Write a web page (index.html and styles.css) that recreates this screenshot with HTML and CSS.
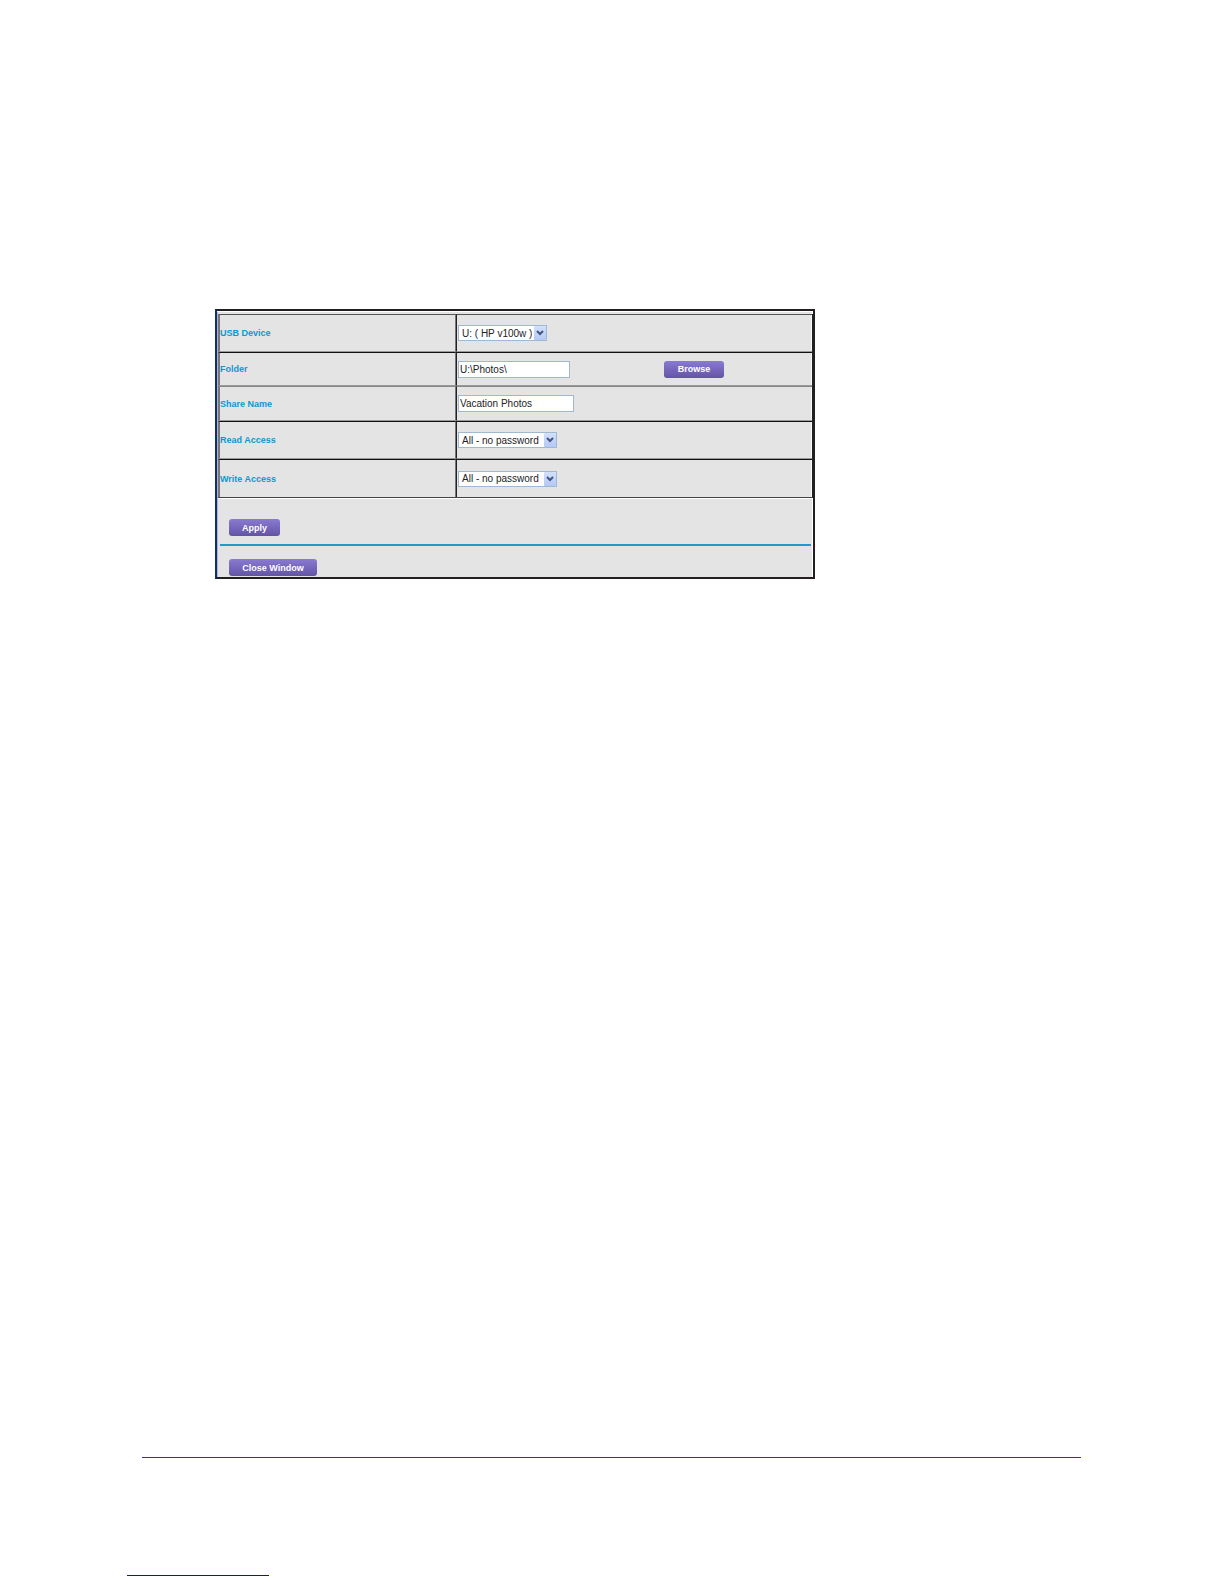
FILE: index.html
```html
<!DOCTYPE html>
<html lang="en">

<head>
  <meta charset="UTF-8">
  <meta name="viewport" content="width=device-width, initial-scale=1.0">
  <title>USB Folder</title>
  <link rel="stylesheet" href="styles.css">
</head>

<body>
  <main class="content">
    <form class="panel" autocomplete="off">
      <table class="settings">
        <tbody>
          <tr>
            <th scope="row"><label for="device">USB Device</label></th>
            <td>
              <span class="select-box">
                <select name="device" id="device" class="device">
                  <option>U: ( HP v100w )</option>
                </select>
                <svg class="arrow" viewBox="0 0 12 14"><path d="M3 5l3 3 3-3" /></svg>
              </span>
            </td>
          </tr>
          <tr class="short">
            <th scope="row"><label for="folder">Folder</label></th>
            <td>
              <div class="folder-row">
                <input type="text" name="folder" id="folder" class="folder" value="U:\Photos\">
                <button type="button" class="btn browse">Browse</button>
              </div>
            </td>
          </tr>
          <tr class="short">
            <th scope="row"><label for="share">Share Name</label></th>
            <td><input type="text" name="share" id="share" class="share" value="Vacation Photos"></td>
          </tr>
          <tr>
            <th scope="row"><label for="read">Read Access</label></th>
            <td>
              <span class="select-box">
                <select name="read" id="read" class="access">
                  <option>All - no password</option>
                </select>
                <svg class="arrow" viewBox="0 0 12 14"><path d="M3 5l3 3 3-3" /></svg>
              </span>
            </td>
          </tr>
          <tr>
            <th scope="row"><label for="write">Write Access</label></th>
            <td>
              <span class="select-box">
                <select name="write" id="write" class="access">
                  <option>All - no password</option>
                </select>
                <svg class="arrow" viewBox="0 0 12 14"><path d="M3 5l3 3 3-3" /></svg>
              </span>
            </td>
          </tr>
        </tbody>
      </table>
      <div class="apply-row">
        <button type="button" class="btn apply">Apply</button>
      </div>
      <div class="close-row">
        <button type="button" class="btn close">Close Window</button>
      </div>
    </form>
  </main>

  <footer class="footer">
    <hr class="footer-line">
    <hr class="link-line">
  </footer>
</body>

</html>
```
FILE: styles.css
```css
* {
  margin: 0;
  padding: 0;
  box-sizing: border-box;
}

body {
  display: flex;
  flex-direction: column;
  min-height: 100vh;
  background-color: #fff;
  font-family: "Liberation Sans", Arial, sans-serif;
  font-size: 10px;
  color: #222;
}

.content {
  flex: 1;
  padding: 309px 24px 24px 215px;
}

/* panel */
.panel {
  max-width: 600px;
  padding: 3px 0 1px 1px;
  background-color: #e4e4e4;
  border: 2px solid #231f20;
  border-left-color: #0b2c80;
  box-shadow: inset -1px 1px #fff, inset 1px 0 #b5b5b5;
}

.settings {
  width: 100%;
  border-collapse: separate;
  border-spacing: 0;
  border-right: 1px solid #222;
  border-bottom: 1px solid #444;
  box-shadow: 0 1px #fff;
}

.settings th,
.settings td {
  height: 38px;
  padding: 0 1px;
  border-top: 1px solid #111;
  border-bottom: 1px solid #999;
  text-align: left;
  vertical-align: middle;
}

.settings th {
  width: 238px;
  padding-left: 0;
  border-left: 2px solid #777;
  border-right: 1px solid #777;
  font-size: 9px;
  font-weight: bold;
  color: #0c98cf;
}

.settings td {
  border-left: 1px solid #222;
  box-shadow: inset -1px 0 #f6f6f6;
}

.settings tr:first-child th,
.settings tr:first-child td {
  border-top-color: #555;
}

.settings tr:last-child th,
.settings tr:last-child td {
  border-bottom: none;
}

.settings .short th,
.settings .short td {
  height: 34px;
}

.settings .short + .short th,
.settings .short + .short td {
  height: 35px;
  border-top-color: #888;
}

/* controls */
input,
select {
  display: block;
  font-family: inherit;
  font-size: 10px;
  color: #222;
  background-color: #fff;
  border: 1px solid #9fb9d3;
  border-radius: 0;
}

input {
  height: 17px;
  padding: 0 1px;
}

select {
  height: 16px;
  padding: 0 14px 0 3px;
  appearance: none;
}

.folder {
  width: 112px;
}

.device {
  width: 89px;
}

.share {
  width: 116px;
}

.access {
  width: 99px;
}

.select-box {
  display: inline-block;
  position: relative;
  vertical-align: middle;
}

.arrow {
  position: absolute;
  top: 1px;
  right: 1px;
  width: 12px;
  height: 14px;
  background: linear-gradient(#d3e0fc, #b4c8f6);
  border-radius: 1px;
  fill: none;
  stroke: #40567f;
  stroke-width: 2;
  pointer-events: none;
}

.folder-row {
  display: flex;
  align-items: center;
  gap: 94px;
}

.btn {
  display: block;
  height: 17px;
  border: none;
  border-radius: 3px;
  background: linear-gradient(#8a7bd2, #7263b8 60%, #6354a2);
  font-family: inherit;
  font-size: 9px;
  font-weight: bold;
  color: #fff;
  cursor: pointer;
}

.browse {
  width: 60px;
}

.apply {
  width: 51px;
}

.close {
  width: 88px;
}

.apply-row {
  margin: 0 2px;
  padding: 21px 9px 8px;
  border-bottom: 2px solid #2499c9;
}

.close-row {
  padding: 13px 11px 0;
}

/* footer */
.footer {
  padding: 0 143px 8px 127px;
}

.footer hr {
  border: none;
  height: 1px;
}

.footer .footer-line {
  margin-left: 15px;
  background-color: #55297a;
}

.footer .link-line {
  width: 142px;
  margin-top: 117px;
  background-color: #12129a;
}
```
